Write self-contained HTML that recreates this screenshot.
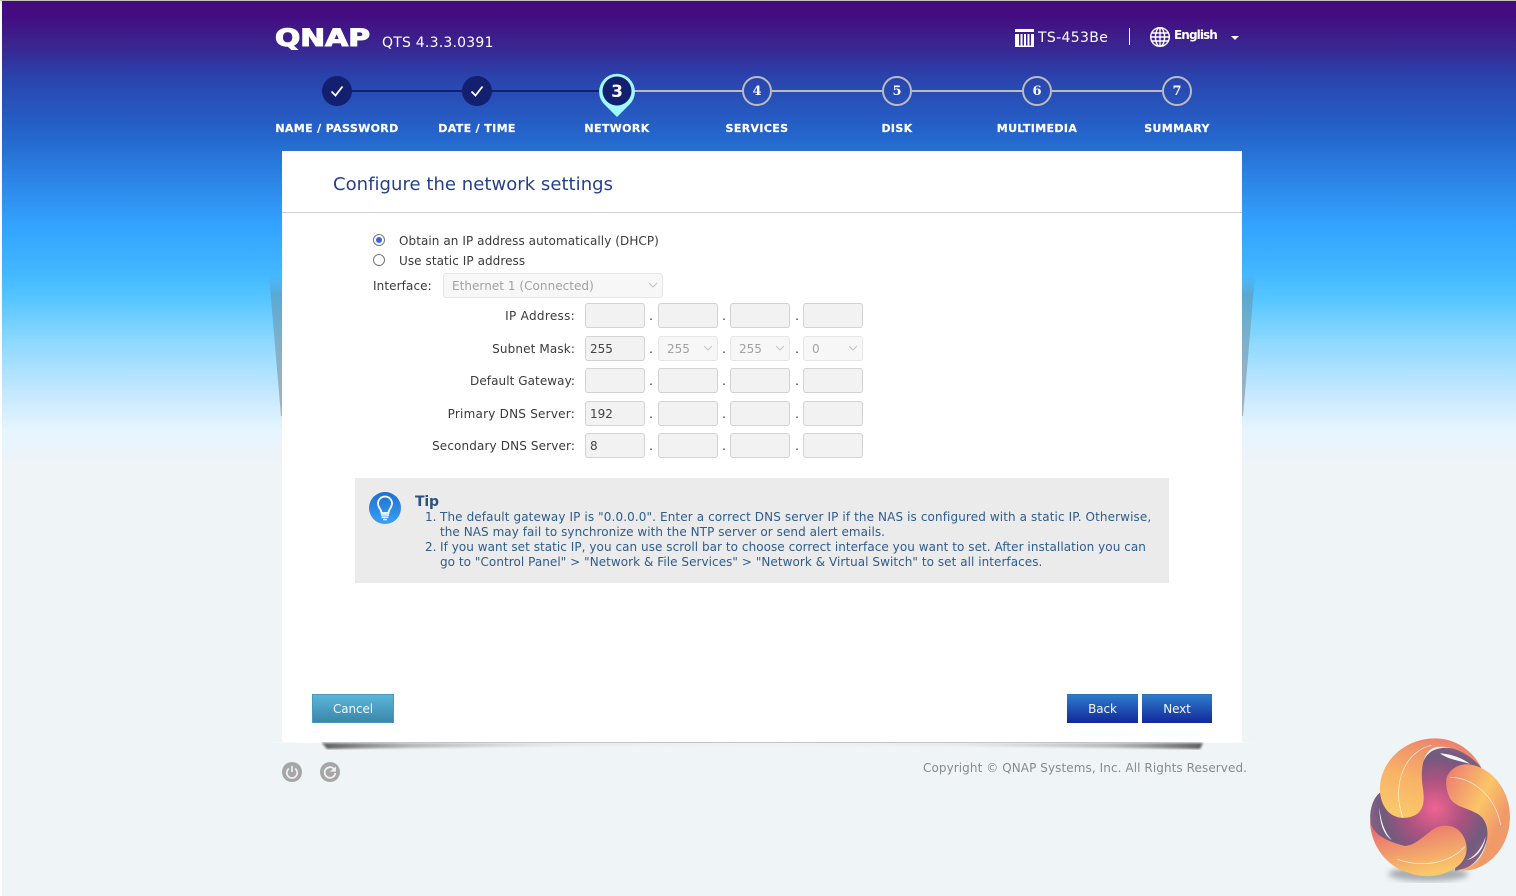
<!DOCTYPE html>
<html><head><meta charset="utf-8"><title>QNAP</title>
<style>
*{box-sizing:border-box}
html,body{margin:0;padding:0;width:1516px;height:896px;overflow:hidden;background:#fff}
body{position:relative;font-family:"DejaVu Sans","Liberation Sans",sans-serif;font-size:12px;color:#333}
#bg{position:absolute;left:2px;top:1px;right:0;bottom:0;background:linear-gradient(180deg,#440b7e 0,#440c80 14px,#3a2590 45px,#2a42ac 75px,#2466cc 135px,#2b82e4 175px,#33a3ff 225px,#3fb4ff 265px,#52c4ff 295px,#90d9ff 343px,#c8e9ff 395px,#e6f5ff 430px,#eff4f7 465px,#eff4f7 100%)}
#top{position:absolute;left:0;top:0;width:1516px;height:1px;background:#c4c4bc}
.t{position:absolute;white-space:nowrap;line-height:16px;height:16px}
.c{transform:translateX(-50%);text-align:center}
.lb{color:#fff;font-weight:bold;font-size:11px;letter-spacing:.36px;top:121px;-webkit-text-stroke:.2px #fff}
.line{position:absolute;height:2px;top:90px}
.st{position:absolute;width:30px;height:30px;top:76px;border-radius:50%;border:2px solid #bcbcbc;color:#fff;font:bold 13px/28px "DejaVu Serif",serif;text-align:center}
.dn{position:absolute;width:30px;height:30px;top:76px;border-radius:50%;background:#12206f}
#panel{position:absolute;left:282px;top:151px;width:960px;height:591px;background:#fff}
.in{position:absolute;width:60px;height:25px;background:#f2f2f2;border:1px solid #d2d2d2;border-radius:3px;color:#444;font-size:12px;line-height:25px;padding-left:4px}
.sl{position:absolute;width:60px;height:25px;background:#f7f7f7;border:1px solid #e6e6e6;border-radius:3px;color:#a2a2a2;font-size:12px;line-height:25px;padding-left:8px}
.sl svg{position:absolute;right:4px;top:8px}
.dot{position:absolute;color:#333;font-size:12px;line-height:16px;width:6px;text-align:center}
.lab{position:absolute;right:941px;white-space:nowrap;line-height:16px;color:#3a3a3a;letter-spacing:.13px}
.tip{color:#2f5c8a;letter-spacing:.05px}
.txt{letter-spacing:.07px;color:#3a3a3a}
.btn{position:absolute;top:694px;height:29px;color:#f2f8ff;text-align:center;line-height:28px;font-size:12px;letter-spacing:-.1px}
</style></head><body>
<div id="bg"></div><div id="top"></div>

<svg style="position:absolute;left:272px;top:24px" width="104" height="28" viewBox="0 0 104 28"><text x="3" y="22" font-family="DejaVu Sans" font-weight="bold" font-size="24" fill="#fff" stroke="#fff" stroke-width="1.1" textLength="95" lengthAdjust="spacingAndGlyphs">QNAP</text></svg>
<div class="t" style="left:382px;top:35px;color:#fff;font-size:14px;letter-spacing:.22px">QTS 4.3.3.0391</div>

<svg style="position:absolute;left:1015px;top:29px" width="20" height="19" viewBox="0 0 20 19"><path d="M0 0H19V3H0ZM0 5H4V18H0ZM5.5 5H7.5V16.5H5.5ZM9 5H11V16.5H9ZM12.5 5H14.5V16.5H12.5ZM16 5H19V18H16ZM4 16.5H16V18H4Z" fill="#fff"/></svg>
<div class="t" style="left:1038px;top:30px;color:#fff;font-size:14px;letter-spacing:.35px">TS-453Be</div>
<div style="position:absolute;left:1129px;top:28px;width:1px;height:17px;background:#fff"></div>
<svg style="position:absolute;left:1149px;top:26px" width="22" height="22" viewBox="0 0 22 22" fill="none" stroke="#fff" stroke-width="1.4"><circle cx="11" cy="11" r="9.3"/><ellipse cx="11" cy="11" rx="4.6" ry="9.3"/><path d="M11 1.5V20.5M2.5 7H19.5M2 11H20M2.5 15H19.5"/></svg>
<div class="t" style="left:1174px;top:27px;color:#fff;font-size:12px;font-weight:bold;letter-spacing:-.9px">English</div>
<svg style="position:absolute;left:1230px;top:35px" width="10" height="6"><path d="M1 1H9L5 5Z" fill="#fff"/></svg>

<div class="line" style="left:352px;width:248px;background:#12206f"></div>
<div class="line" style="left:634px;width:108px;background:#bcbcbc"></div>
<div class="line" style="left:772px;width:110px;background:#bcbcbc"></div>
<div class="line" style="left:912px;width:110px;background:#bcbcbc"></div>
<div class="line" style="left:1052px;width:110px;background:#bcbcbc"></div>

<div class="dn" style="left:322px"><svg width="30" height="30" fill="none" stroke="#fff" stroke-width="1.8"><path d="M9.5 15.5L13.5 19.5L20.5 10.5"/></svg></div>
<div class="dn" style="left:462px"><svg width="30" height="30" fill="none" stroke="#fff" stroke-width="1.8"><path d="M9.5 15.5L13.5 19.5L20.5 10.5"/></svg></div>
<svg style="position:absolute;left:597px;top:71px" width="40" height="48" viewBox="0 0 40 48"><path d="M20 46L7.5 33.5A17.9 17.9 0 1 1 32.5 33.5Z" fill="#a2f8ff"/><circle cx="20" cy="20" r="14.5" fill="#12206f"/><text x="20" y="26" text-anchor="middle" font-family="DejaVu Sans" font-weight="bold" font-size="17" fill="#fff">3</text></svg>
<div class="st" style="left:742px">4</div>
<div class="st" style="left:882px">5</div>
<div class="st" style="left:1022px">6</div>
<div class="st" style="left:1162px">7</div>

<div class="t c lb" style="left:337px">NAME / PASSWORD</div>
<div class="t c lb" style="left:477px">DATE / TIME</div>
<div class="t c lb" style="left:617px">NETWORK</div>
<div class="t c lb" style="left:757px">SERVICES</div>
<div class="t c lb" style="left:897px">DISK</div>
<div class="t c lb" style="left:1037px">MULTIMEDIA</div>
<div class="t c lb" style="left:1177px">SUMMARY</div>

<svg style="position:absolute;left:268px;top:275px" width="988" height="145"><defs><linearGradient id="sh" x1="0" y1="0" x2="0" y2="1"><stop offset="0" stop-color="#5f8fa8" stop-opacity="0"/><stop offset=".14" stop-color="#5f8fa8" stop-opacity=".5"/><stop offset="1" stop-color="#9aa8b0" stop-opacity=".85"/></linearGradient></defs><path d="M1 0H14V141H13Z" fill="url(#sh)"/><path d="M987 0H974V141H975Z" fill="url(#sh)"/></svg>

<div id="panel"></div>
<div style="position:absolute;left:262px;top:742px;width:1000px;height:1px;background:linear-gradient(90deg,rgba(255,255,255,0),#fff 5%,#fff 95%,rgba(255,255,255,0))"></div>
<svg style="position:absolute;left:315px;top:741px" width="895" height="14"><defs><linearGradient id="bs" x1="0" x2="1" y1="0" y2="0"><stop offset="0" stop-color="#444" stop-opacity=".85"/><stop offset=".1" stop-color="#777" stop-opacity=".5"/><stop offset=".28" stop-color="#aaa" stop-opacity=".15"/><stop offset=".5" stop-color="#bbb" stop-opacity=".05"/><stop offset=".72" stop-color="#aaa" stop-opacity=".15"/><stop offset=".9" stop-color="#777" stop-opacity=".5"/><stop offset="1" stop-color="#444" stop-opacity=".85"/></linearGradient><filter id="bl"><feGaussianBlur stdDeviation="1.1"/></filter></defs><path d="M7 2H888L885 8Q600 4 445 4Q280 4 12 8Z" fill="url(#bs)" filter="url(#bl)"/></svg>
<div style="position:absolute;left:322px;top:742px;width:880px;height:1px;background:#c4c4c4"></div>

<div class="t" style="left:333px;top:174px;height:22px;line-height:22px;font-size:18px;color:#27408b;letter-spacing:.04px">Configure the network settings</div>
<div style="position:absolute;left:282px;top:212px;width:960px;height:1px;background:#d0d0d0"></div>

<svg style="position:absolute;left:372px;top:233px" width="14" height="34" fill="none"><circle cx="7" cy="7" r="5.5" fill="#fff" stroke="#777"/><circle cx="7" cy="7" r="3" fill="#3b66d8"/><circle cx="7" cy="27" r="5.5" fill="#fff" stroke="#777"/></svg>
<div class="t txt" style="left:399px;top:233px">Obtain an IP address automatically (DHCP)</div>
<div class="t txt" style="left:399px;top:253px">Use static IP address</div>
<div class="t txt" style="left:373px;top:278px;letter-spacing:.1px">Interface:</div>
<div class="sl" style="left:443px;top:273px;width:220px;padding-left:8px;letter-spacing:.04px">Ethernet 1 (Connected)<svg width="10" height="6" fill="none" stroke="#c4c4c4"><path d="M1 1L5 5L9 1"/></svg></div>

<div class="lab" style="top:308px;letter-spacing:.31px">IP Address:</div>
<div class="lab" style="top:341px">Subnet Mask:</div>
<div class="lab" style="top:373px;letter-spacing:.07px">Default Gateway:</div>
<div class="lab" style="top:406px;letter-spacing:.23px">Primary DNS Server:</div>
<div class="lab" style="top:438px">Secondary DNS Server:</div>

<div class="in" style="left:585px;top:303px"></div><div class="in" style="left:658px;top:303px"></div><div class="in" style="left:730px;top:303px"></div><div class="in" style="left:803px;top:303px"></div>
<div class="in" style="left:585px;top:336px">255</div>
<div class="sl" style="left:658px;top:336px">255<svg width="10" height="6" fill="none" stroke="#c4c4c4"><path d="M1 1L5 5L9 1"/></svg></div>
<div class="sl" style="left:730px;top:336px">255<svg width="10" height="6" fill="none" stroke="#c4c4c4"><path d="M1 1L5 5L9 1"/></svg></div>
<div class="sl" style="left:803px;top:336px">0<svg width="10" height="6" fill="none" stroke="#c4c4c4"><path d="M1 1L5 5L9 1"/></svg></div>
<div class="in" style="left:585px;top:368px"></div><div class="in" style="left:658px;top:368px"></div><div class="in" style="left:730px;top:368px"></div><div class="in" style="left:803px;top:368px"></div>
<div class="in" style="left:585px;top:401px">192</div><div class="in" style="left:658px;top:401px"></div><div class="in" style="left:730px;top:401px"></div><div class="in" style="left:803px;top:401px"></div>
<div class="in" style="left:585px;top:433px">8</div><div class="in" style="left:658px;top:433px"></div><div class="in" style="left:730px;top:433px"></div><div class="in" style="left:803px;top:433px"></div>

<div class="dot" style="left:648px;top:308px">.</div><div class="dot" style="left:721px;top:308px">.</div><div class="dot" style="left:794px;top:308px">.</div>
<div class="dot" style="left:648px;top:341px">.</div><div class="dot" style="left:721px;top:341px">.</div><div class="dot" style="left:794px;top:341px">.</div>
<div class="dot" style="left:648px;top:373px">.</div><div class="dot" style="left:721px;top:373px">.</div><div class="dot" style="left:794px;top:373px">.</div>
<div class="dot" style="left:648px;top:406px">.</div><div class="dot" style="left:721px;top:406px">.</div><div class="dot" style="left:794px;top:406px">.</div>
<div class="dot" style="left:648px;top:438px">.</div><div class="dot" style="left:721px;top:438px">.</div><div class="dot" style="left:794px;top:438px">.</div>

<div style="position:absolute;left:355px;top:478px;width:814px;height:105px;background:#ebebeb"></div>
<svg style="position:absolute;left:369px;top:492px" width="32" height="32" viewBox="0 0 32 32"><defs><linearGradient id="tb" x1="0" y1="0" x2="0" y2="1"><stop offset="0" stop-color="#1e6fd0"/><stop offset="1" stop-color="#3ba0f4"/></linearGradient></defs><circle cx="16" cy="16" r="16" fill="url(#tb)"/><path d="M12.5 21C12.5 17.5 9 15.5 9 11.5A7 7 0 0 1 23 11.5C23 15.5 19.5 17.5 19.5 21Z" fill="none" stroke="#fff" stroke-width="1.8"/><path d="M12 23H20M12.5 25.3H19.5M14 27.5H18" stroke="#fff" stroke-width="1.5"/></svg>
<div class="t" style="left:415px;top:494px;font-size:14px;font-weight:bold;color:#2c5080;letter-spacing:-.2px">Tip</div>
<div class="t tip" style="left:425px;top:509px">1.</div>
<div class="t tip" style="left:440px;top:509px;letter-spacing:.11px">The default gateway IP is "0.0.0.0". Enter a correct DNS server IP if the NAS is configured with a static IP. Otherwise,</div>
<div class="t tip" style="left:440px;top:524px;letter-spacing:.055px">the NAS may fail to synchronize with the NTP server or send alert emails.</div>
<div class="t tip" style="left:425px;top:539px">2.</div>
<div class="t tip" style="left:440px;top:539px">If you want set static IP, you can use scroll bar to choose correct interface you want to set. After installation you can</div>
<div class="t tip" style="left:440px;top:554px">go to "Control Panel" &gt; "Network &amp; File Services" &gt; "Network &amp; Virtual Switch" to set all interfaces.</div>

<div class="btn" style="left:312px;width:82px;background:linear-gradient(180deg,#5bb6da,#3a87a9);border:1px solid #4a9abd">Cancel</div>
<div class="btn" style="left:1067px;width:71px;background:linear-gradient(180deg,#2d7bcb,#12289a);border-top:1px solid #2b74c4">Back</div>
<div class="btn" style="left:1142px;width:70px;background:linear-gradient(180deg,#2d7bcb,#12289a);border-top:1px solid #2b74c4">Next</div>

<svg style="position:absolute;left:282px;top:762px" width="60" height="20" viewBox="0 0 60 20"><circle cx="10" cy="10" r="10" fill="#a6a6a6"/><path d="M6.9 6.6A5.2 5.2 0 1 0 13.1 6.6" fill="none" stroke="#f0f0f0" stroke-width="1.7"/><path d="M10 4V10" stroke="#f0f0f0" stroke-width="1.7"/><circle cx="48" cy="10" r="10" fill="#a6a6a6"/><path d="M52.8 8.2A5.3 5.3 0 1 0 53.3 11" fill="none" stroke="#f0f0f0" stroke-width="1.8"/><path d="M47.8 9.6H54V4.6Z" fill="#f0f0f0"/></svg>
<div class="t" style="left:923px;top:760px;color:#8a8a8a;letter-spacing:.08px">Copyright © QNAP Systems, Inc. All Rights Reserved.</div>

<svg style="position:absolute;left:1340px;top:720px" width="176" height="176" viewBox="0 0 528 528">
<defs>
<radialGradient id="core" cx="285" cy="265" r="200" gradientUnits="userSpaceOnUse"><stop offset="0" stop-color="#ef6391"/><stop offset=".45" stop-color="#a8527f"/><stop offset=".8" stop-color="#6f5b7e"/><stop offset="1" stop-color="#8a5f84"/></radialGradient>
<linearGradient id="p1" x1=".7" y1="0" x2=".3" y2="1"><stop offset="0" stop-color="#ec7f6e"/><stop offset=".55" stop-color="#f7b266"/><stop offset="1" stop-color="#fbc868"/></linearGradient>
<linearGradient id="p2" x1=".1" y1=".05" x2=".8" y2=".6"><stop offset="0" stop-color="#ee8470"/><stop offset=".6" stop-color="#fbc568"/><stop offset="1" stop-color="#f09a6a"/></linearGradient>
<linearGradient id="p3" x1=".3" y1=".1" x2=".6" y2=".95"><stop offset="0" stop-color="#ea7070"/><stop offset=".5" stop-color="#f09c6c"/><stop offset="1" stop-color="#fbc868"/></linearGradient>
<filter id="b"><feGaussianBlur stdDeviation="9"/></filter>
<filter id="s"><feGaussianBlur stdDeviation="1"/></filter>
</defs>
<ellipse cx="265" cy="462" rx="120" ry="22" fill="#6d7478" opacity=".55" filter="url(#b)"/>
<g filter="url(#s)">
<path d="M120 218C92 240 85 290 95 325C112 372 150 385 200 382C250 378 300 360 350 352L345 452C400 450 435 400 445 340C455 280 445 180 425 145C405 110 350 75 300 85C260 90 235 130 245 190C170 250 130 235 120 218Z" fill="url(#core)"/>
<path d="M300 100C340 102 372 118 390 132C352 120 325 118 300 100ZM118 262C122 300 132 335 155 360C130 345 118 305 118 262ZM380 420C405 410 425 385 437 350C432 385 410 415 380 420Z" fill="#f4f7fa"/>
<path d="M120 215C115 130 190 55 285 55C345 55 398 90 425 145C395 105 335 72 285 82C250 92 240 145 248 200C254 235 252 262 236 278C215 298 165 302 140 270C128 255 121 235 120 215Z" fill="url(#p1)"/>
<path d="M320 172C332 145 358 130 388 133C455 142 510 210 510 290C510 365 465 430 400 448C385 452 365 452 350 450C395 445 425 420 437 375C450 335 440 295 410 280C385 265 345 260 330 235C320 215 316 190 320 172Z" fill="url(#p2)"/>
<path d="M90 300C95 345 145 365 195 378C235 375 260 335 295 320C335 308 372 330 379 375C384 410 365 435 335 450C300 470 250 476 205 458C140 440 90 375 90 300Z" fill="url(#p3)"/>
<g fill="none" stroke="#fff" stroke-width="2" opacity=".85"><path d="M275 76C205 90 150 180 188 292"/><path d="M330 172C395 172 465 225 482 315"/><path d="M172 418C235 440 320 438 375 380"/></g>
</g>
</svg>
</body></html>
